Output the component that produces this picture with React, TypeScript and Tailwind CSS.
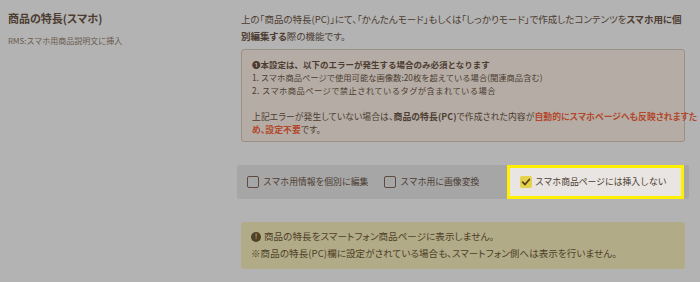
import React from "react"

const font = "font-['Noto_Sans_CJK_JP','Noto_Sans',sans-serif] [font-feature-settings:'palt']"
const plain = "[font-feature-settings:normal]"

function Box({ checked = false }: { checked?: boolean }) {
  if (checked) {
    return (
      <span className="flex h-[12px] w-[12px] shrink-0 items-center justify-center rounded-[2px] bg-[#e3d24a]">
        <svg viewBox="0 0 12 12" className="h-[10px] w-[10px]">
          <path d="M2 6.2 L4.8 9 L10 3" fill="none" stroke="#5a4126" strokeWidth="2.2" strokeLinecap="round" strokeLinejoin="round" />
        </svg>
      </span>
    )
  }
  return <span className="h-[12px] w-[12px] shrink-0 rounded-[2px] border-[1.5px] border-[#5e4b40]" />
}

export default function App() {
  return (
    <div className={`flex h-[282px] w-[700px] bg-[#b3b3b3] text-[#4d3c31] ${font}`}>
      <div className="w-[241px] shrink-0 pl-2 pt-[9px]">
        <h2 className="text-[11px] font-bold leading-[18px]">商品の特長(スマホ)</h2>
        <p className={`mt-[8px] text-[8px] leading-[12px] text-[#6a5a4e] ${plain}`}>RMS:スマホ用商品説明文に挿入</p>
      </div>

      <div className="w-[444px] pt-[11px]">
        <p className="text-[9.5px] leading-[17px]">
          上の「商品の特長(PC)」にて、「かんたんモード」もしくは「しっかりモード」で作成したコンテンツを
          <b>スマホ用に個別編集する</b>際の機能です。
        </p>

        <div className="mt-[4px] h-[93px] rounded-[3px] border border-[#9c8f83] bg-[#b5ada5] px-[10px] pt-[8px] text-[8.3px] leading-[13px]">
          <p className={`text-[8.5px] font-bold ${plain}`}>❶本設定は、以下のエラーが発生する場合のみ必須となります</p>
          <p className={plain}>1. スマホ商品ページで使用可能な画像数:20枚を超えている場合(関連商品含む)</p>
          <p className={`tracking-[0.4px] ${plain}`}>2. スマホ商品ページで禁止されているタグが含まれている場合</p>
          <p className="mt-[13px] whitespace-nowrap text-[8.8px] tracking-[0.1px]">
            上記エラーが発生していない場合は、<b>商品の特長(PC)</b>で作成された内容が
            <b className="text-[#b2472b]">自動的にスマホページへも反映されますた<br />め、設定不要</b>です。
          </p>
        </div>

        <div className={`-mx-[4px] mt-[23px] flex h-[34px] items-center whitespace-nowrap rounded-[2px] bg-[#a6a6a6] pl-[10px] pr-[5px] text-[8.8px] ${plain}`}>
          <label className="flex items-center gap-[4px]">
            <Box />
            <span>スマホ用情報を個別に編集</span>
          </label>
          <label className="ml-[16px] flex items-center gap-[4px]">
            <Box />
            <span>スマホ用に画像変換</span>
          </label>
          <div className="ml-auto flex h-[34px] w-[177px] items-center gap-[3px] border-[3px] border-[#fff000] bg-[#e8e5e2] pl-[10px]">
            <Box checked />
            <span>スマホ商品ページには挿入しない</span>
          </div>
        </div>

        <div className="mt-[23px] h-[47px] rounded-[3px] bg-[#b1ab88] px-[10px] pt-[6px] text-[9.5px] leading-[17px] tracking-[0.1px] text-[#4f4026]">
          <p className="flex items-center gap-[3px]">
            <span className="flex h-[10px] w-[10px] items-center justify-center rounded-full bg-[#4f4026] text-[7px] font-bold leading-none text-[#b1ab88]">!</span>
            商品の特長をスマートフォン商品ページに表示しません。
          </p>
          <p>※商品の特長(PC)欄に設定がされている場合も、スマートフォン側へは表示を行いません。</p>
        </div>
      </div>
    </div>
  )
}
